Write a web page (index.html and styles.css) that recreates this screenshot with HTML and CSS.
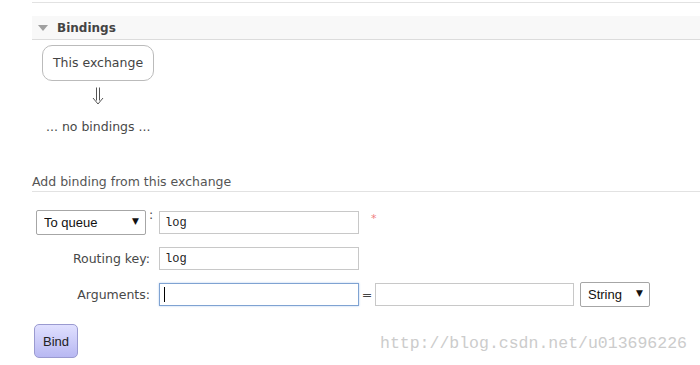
FILE: index.html
```html
<!DOCTYPE html>
<html lang="en">
<head>
    <meta charset="UTF-8">
    <title>Exchange bindings</title>
    <link rel="stylesheet" href="styles.css">
</head>
<body>
    <div class="page">
        <div class="top-rule"></div>

        <div class="section-head">
            <span class="toggle"></span>
            <span class="section-title">Bindings</span>
        </div>

        <div class="bindings">
            <div class="exchange-box">This exchange</div>
            <div class="arrow">
                <svg width="12" height="18" viewBox="0 0 12 18" fill="none" stroke="#555" stroke-width="1">
                    <path d="M4.5 0.5 V13.5 M7.5 0.5 V13.5" />
                    <path d="M1 11 L6 17 L11 11" />
                </svg>
            </div>
        </div>
        <p class="no-bindings">... no bindings ...</p>

        <h3 class="form-title">Add binding from this exchange</h3>

        <form class="binding-form" onsubmit="return false">
            <div class="cell-first">
                <span class="select-wrap select-dest">
                    <select>
                        <option>To queue</option>
                        <option>To exchange</option>
                    </select>
                </span>
                <span class="colon">:</span>
            </div>
            <div class="cell-field">
                <input type="text" class="text-input" value="log">
                <span class="mandatory">*</span>
            </div>

            <label class="cell-label">Routing key:</label>
            <div class="cell-field">
                <input type="text" class="text-input" value="log">
            </div>

            <label class="cell-label">Arguments:</label>
            <div class="cell-field">
                <span class="caret-wrap"><input type="text" class="text-input focused" value=""></span>
                <span class="equals">=</span>
                <input type="text" class="text-input arg-value" value="">
                <span class="select-wrap select-type">
                    <select>
                        <option>String</option>
                        <option>Number</option>
                        <option>Boolean</option>
                    </select>
                </span>
            </div>
        </form>

        <button class="bind-btn" type="button">Bind</button>
    </div>

    <div class="watermark">http://blog.csdn.net/u013696226</div>
</body>
</html>
```

FILE: styles.css
```css
body {
    margin: 0;
    background-color: #fff;
    color: #484848;
    font-family: "DejaVu Sans", Verdana, sans-serif;
    font-size: 12.5px;
}
.page {
    padding-left: 32px;
    padding-top: 2px;
}
.top-rule {
    border-top: 1px solid #e2e2e2;
}
.section-head {
    margin-top: 13px;
    height: 23px;
    display: flex;
    align-items: center;
    background-color: #f8f8f8;
    border-bottom: 1px solid #dcdcdc;
}
.toggle {
    width: 0;
    height: 0;
    margin-left: 6px;
    margin-top: 1px;
    border-left: 5px solid transparent;
    border-right: 5px solid transparent;
    border-top: 6px solid #a0a0a0;
}
.section-title {
    margin-left: 9px;
    font-weight: bold;
    font-size: 12px;
    color: #444;
}
.bindings {
    width: 112px;
    margin-left: 10px;
    margin-top: 5px;
    text-align: center;
}
.exchange-box {
    height: 34px;
    line-height: 34px;
    border: 1px solid #bbb;
    border-radius: 10px;
    color: #444;
}
.arrow {
    margin-top: 6px;
    height: 20px;
}
.arrow svg {
    display: inline-block;
}
.no-bindings {
    margin: 12px 0 0 14px;
    line-height: 16px;
}
.form-title {
    margin: 39px 0 0 0;
    padding-bottom: 1px;
    line-height: 16px;
    font-size: 12.5px;
    font-weight: normal;
    color: #555;
    border-bottom: 1px solid #e2e2e2;
}
.binding-form {
    margin-top: 18px;
    display: grid;
    grid-template-columns: 127px auto;
    row-gap: 12px;
    align-items: center;
}
.cell-first {
    display: flex;
    padding-left: 4px;
}
.colon {
    margin-left: 3px;
    line-height: 10px;
}
.cell-label {
    text-align: right;
    padding-right: 9px;
}
.cell-field {
    display: flex;
    align-items: center;
}
.text-input {
    box-sizing: border-box;
    width: 200px;
    height: 23px;
    margin: 0;
    padding: 0 5px;
    border: 1px solid #c8c8c8;
    font-family: "Liberation Mono", "Courier New", monospace;
    font-size: 12px;
    color: #222;
    outline: none;
}
.text-input.focused {
    border-color: #7fa3d2;
    box-shadow: 0 0 2px #b5cdee;
}
.arg-value {
    width: 199px;
}
.mandatory {
    margin-left: 12px;
    margin-top: -8px;
    color: #f08080;
    font-size: 11px;
}
.equals {
    width: 16px;
    text-align: center;
    color: #444;
}
.caret-wrap {
    position: relative;
    display: flex;
}
.caret-wrap::after {
    content: "";
    position: absolute;
    left: 5px;
    top: 4px;
    width: 1px;
    height: 15px;
    background-color: #000;
}
.select-wrap {
    position: relative;
    display: flex;
}
.select-wrap select {
    appearance: none;
    -webkit-appearance: none;
    box-sizing: border-box;
    height: 25px;
    margin: 0;
    padding: 0 0 0 7px;
    background-color: #fff;
    border: 1px solid #a6a6a6;
    border-radius: 2px;
    font-family: "Liberation Sans", Arial, sans-serif;
    font-size: 13px;
    color: #111;
}
.select-wrap::after {
    content: "\25BC";
    position: absolute;
    right: 7px;
    top: 6px;
    font-size: 9px;
    color: #111;
    pointer-events: none;
}
.select-dest select {
    width: 110px;
}
.select-type {
    margin-left: 6px;
}
.select-type select {
    width: 70px;
}
.bind-btn {
    margin: 17px 0 0 2px;
    width: 44px;
    height: 34px;
    padding: 0;
    border: 1px solid #9a9ad0;
    border-radius: 5px;
    background: linear-gradient(#e0e0ff, #b8b8f2);
    font-family: "Liberation Sans", Arial, sans-serif;
    font-size: 13px;
    color: #222;
    cursor: pointer;
}
.watermark {
    position: absolute;
    left: 380px;
    top: 333px;
    font-family: "Liberation Mono", "Courier New", monospace;
    font-size: 16.5px;
    line-height: 22px;
    color: #cccccc;
    pointer-events: none;
}
```
